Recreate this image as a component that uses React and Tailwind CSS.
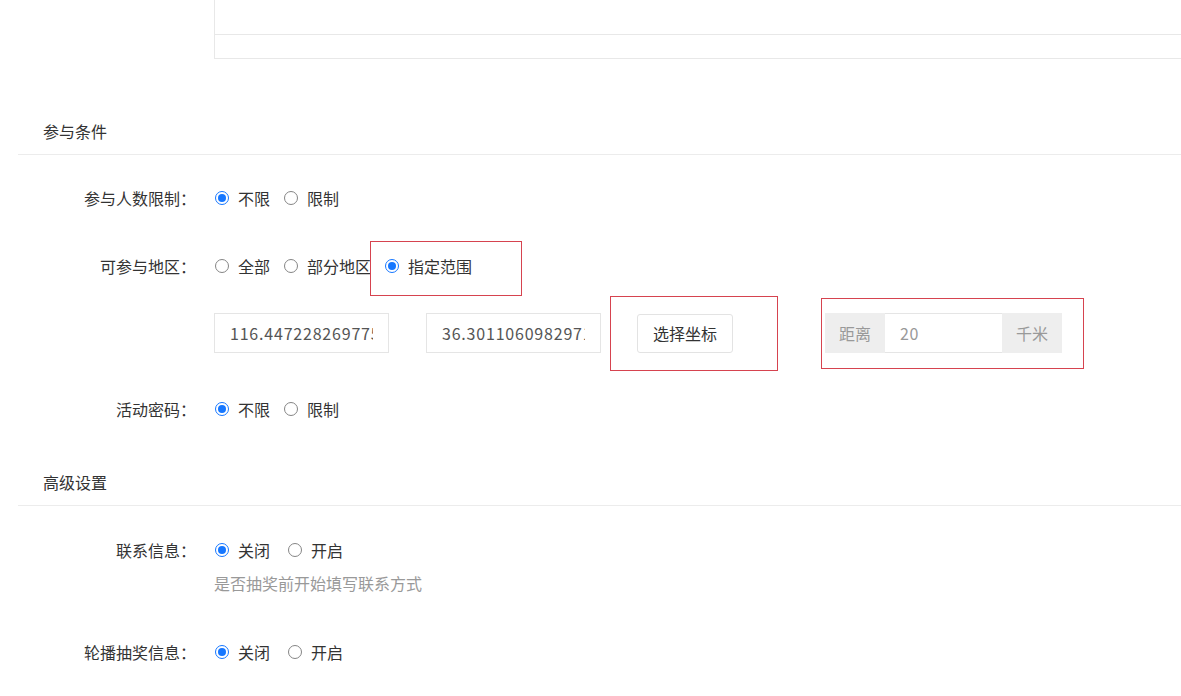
const font = { fontFamily: '"Noto Sans CJK SC", "Noto Sans", sans-serif' }

// ── Radio ──────────────────────────────────────────────
function Radio({ checked, label }) {
  return (
    <label className="flex items-center shrink-0">
      <span
        className={
          checked
            ? 'w-[14px] h-[14px] rounded-full border border-[#1677ff] flex items-center justify-center'
            : 'w-[14px] h-[14px] rounded-full border border-[#858585]'
        }
      >
        {checked && <span className="w-[8px] h-[8px] rounded-full bg-[#1677ff]" />}
      </span>
      <span className="ml-[9px] text-[16px] leading-6 text-[#333]">{label}</span>
    </label>
  )
}

function RadioGroup({ options, value, gap = 'gap-[14px]' }) {
  return (
    <div className={'flex items-center ' + gap}>
      {options.map((o) => (
        <Radio key={o} label={o} checked={o === value} />
      ))}
    </div>
  )
}

// ── Form Row ───────────────────────────────────────────
function Row({ label, children, className = '' }) {
  return (
    <div className={'flex items-center h-[40px] ' + className}>
      <div className="w-[196px] shrink-0 text-right text-[16px] leading-6 text-[#333]">{label}</div>
      <div className="pl-[19px] flex items-center">{children}</div>
    </div>
  )
}

function SectionTitle({ children }) {
  return (
    <div className="ml-[18px] border-b border-[#ececec] flex items-end pb-[11px] pl-[25px] text-[16px] leading-6 text-[#333]">
      {children}
    </div>
  )
}

function RedBox({ className }) {
  return <span className={'absolute border border-[#d6434f] pointer-events-none ' + className} />
}

export default function App() {
  return (
    <div className="w-[1181px] h-[696px] overflow-hidden bg-white" style={font}>
      {/* leftover of the table above */}
      <div className="ml-[214px] h-[59px] border-l border-b border-[#e8e8e8]">
        <div className="h-[35px] border-b border-[#e8e8e8]" />
      </div>

      <div className="h-[96px] flex flex-col justify-end">
        <SectionTitle>参与条件</SectionTitle>
      </div>

      <Row label="参与人数限制：" className="mt-[23px]">
        <RadioGroup options={['不限', '限制']} value="不限" />
      </Row>

      <Row label="可参与地区：" className="mt-[28px]">
        <div className="flex items-center gap-[14px]">
          <Radio label="全部" />
          <Radio label="部分地区" />
          <div className="relative">
            <Radio label="指定范围" checked />
            <RedBox className="-left-[15px] -top-[13px] w-[152px] h-[55px]" />
          </div>
        </div>
      </Row>

      <div className="flex items-center h-[40px] mt-[27px] pl-[214px]">
        <input
          readOnly
          value="116.447228269775"
          className="w-[175px] h-[40px] border border-[#e5e5e5] px-[15px] text-[16px] tracking-[0.8px] text-[#555] outline-none"
        />
        <input
          readOnly
          value="36.301106098297115"
          className="ml-[37px] w-[175px] h-[40px] border border-[#e5e5e5] px-[15px] text-[16px] tracking-[0.8px] text-[#555] outline-none"
        />
        <div className="relative ml-[36px]">
          <button className="w-[96px] h-[39px] border border-[#e3e3e3] rounded-[3px] bg-white text-[16px] text-[#333]">
            选择坐标
          </button>
          <RedBox className="-left-[27px] -top-[18px] w-[168px] h-[75px]" />
        </div>
        <div className="relative ml-[92px] flex h-[40px]">
          <span className="w-[60px] bg-[#eeeeee] flex items-center justify-center text-[16px] text-[#999]">距离</span>
          <input
            readOnly
            value="20"
            className="w-[117px] border-y border-[#e5e5e5] px-[15px] text-[16px] tracking-[0.5px] text-[#999] outline-none"
          />
          <span className="w-[60px] bg-[#eeeeee] flex items-center justify-center text-[16px] text-[#999]">千米</span>
          <RedBox className="-left-[4px] -top-[15px] w-[263px] h-[71px]" />
        </div>
      </div>

      <Row label="活动密码：" className="mt-[36px]">
        <RadioGroup options={['不限', '限制']} value="不限" />
      </Row>

      <div className="h-[77px] flex flex-col justify-end">
        <SectionTitle>高级设置</SectionTitle>
      </div>

      <Row label="联系信息：" className="mt-[24px]">
        <RadioGroup options={['关闭', '开启']} value="关闭" gap="gap-[18px]" />
      </Row>
      <div className="pl-[214px] text-[16px] leading-6 text-[#999] mt-[1px]">是否抽奖前开始填写联系方式</div>

      <Row label="轮播抽奖信息：" className="mt-[37px]">
        <RadioGroup options={['关闭', '开启']} value="关闭" gap="gap-[18px]" />
      </Row>
    </div>
  )
}
